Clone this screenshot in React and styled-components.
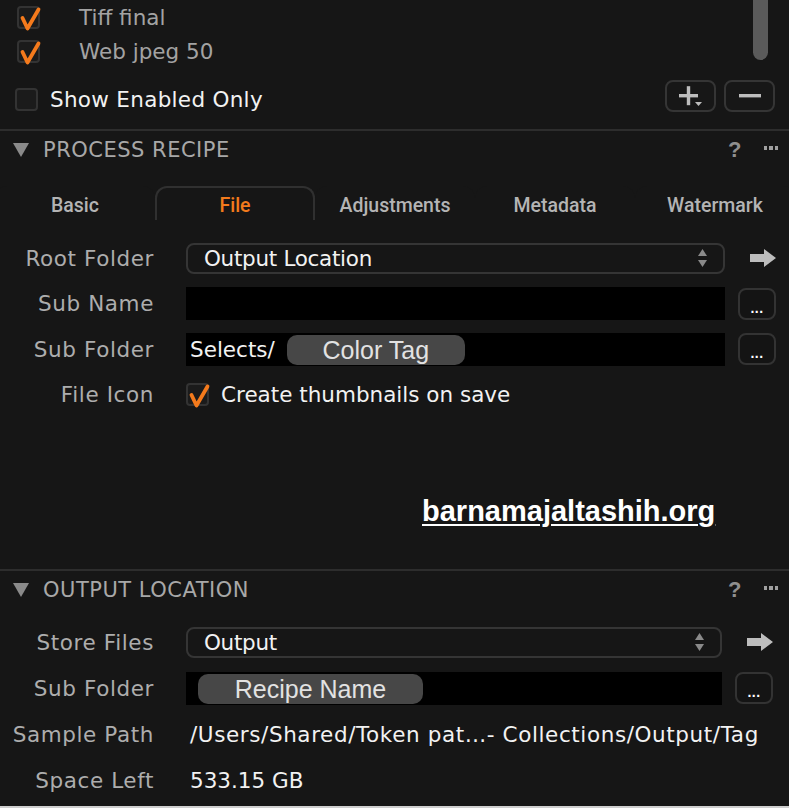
import React from 'react';
import styled, { createGlobalStyle } from 'styled-components';

const GlobalStyle = createGlobalStyle`
  html, body {
    margin: 0;
    padding: 0;
    background: #161616;
  }
`;

const UI_FONT = `"DejaVu Sans", "Liberation Sans", sans-serif`;

const Panel = styled.div`
  width: 789px;
  height: 808px;
  box-sizing: border-box;
  background: #161616;
  border-bottom: 2px solid #cfcfcf;
  display: flex;
  flex-direction: column;
  overflow: hidden;
  font-family: ${UI_FONT};
  font-size: 21.5px;
  color: #f2f2f2;
`;

const RecipeList = styled.div`
  position: relative;
  height: 129px;
  display: flex;
  flex-direction: column;
`;

const ListItem = styled.div`
  height: 34px;
  display: flex;
  align-items: center;
  padding-left: 17px;
`;

const ItemName = styled.span`
  margin-left: 39px;
  color: #a3a3a3;
`;

const Scrollbar = styled.div`
  position: absolute;
  top: 0;
  right: 21px;
  width: 15px;
  height: 60px;
  border-radius: 0 0 8px 8px;
  background: #5a5a5a;
`;

const ListFooter = styled.div`
  display: flex;
  align-items: center;
  margin-top: 13px;
  padding: 0 14px 0 15px;
  height: 32px;
`;

const FooterLabel = styled.span`
  margin-left: 12px;
  flex: 1;
  margin-top: 4px;
  letter-spacing: 0.3px;
`;

const ButtonGroup = styled.div`
  display: flex;
  gap: 8px;
  margin-top: -2px;
`;

const ToolButton = styled.button`
  width: 51px;
  height: 32px;
  box-sizing: border-box;
  border: 2px solid #353535;
  border-radius: 8px;
  background: #171717;
  display: flex;
  align-items: center;
  justify-content: center;
  padding: 0;
`;

const Box = styled.span`
  position: relative;
  width: 23px;
  height: 23px;
  box-sizing: border-box;
  border: 2px solid #333;
  border-radius: 4px;
  background: #1b1b1b;
  flex-shrink: 0;
  display: inline-block;
  margin-top: ${(p) => p.$drop || 0}px;
  svg {
    position: absolute;
    left: -2px;
    top: -5px;
  }
`;

const Divider = styled.div`
  height: 2px;
  background: #2d2d2d;
`;

const SectionHeader = styled.div`
  height: 38px;
  display: flex;
  align-items: center;
  padding: 0 11px 0 13px;
`;

const Disclosure = styled.span`
  width: 0;
  height: 0;
  border-left: 8.5px solid transparent;
  border-right: 8.5px solid transparent;
  border-top: 14px solid #8a8a8a;
`;

const SectionTitle = styled.span`
  margin-left: 14px;
  flex: 1;
  color: #a8a8a8;
  font-size: 21px;
  letter-spacing: 0.5px;
`;

const HelpMark = styled.span`
  font-family: "Liberation Sans", Arial, sans-serif;
  font-weight: 700;
  font-size: 22px;
  color: #8f8f8f;
  margin-right: 22px;
`;

const MoreDots = styled.span`
  display: flex;
  gap: 2px;
  margin-top: -4px;
  i {
    width: 3.5px;
    height: 3.5px;
    background: #a0a0a0;
  }
`;

const TabBar = styled.div`
  margin-top: 15px;
  margin-left: -5px;
  height: 36px;
  box-sizing: border-box;
  border-bottom: 2px solid #303030;
  display: flex;
  align-items: flex-end;
`;

const Tab = styled.div`
  width: 160px;
  height: 34px;
  box-sizing: border-box;
  margin-bottom: -2px;
  flex-shrink: 0;
  display: flex;
  align-items: center;
  justify-content: center;
  font-family: Roboto, "Liberation Sans", sans-serif;
  font-weight: 500;
  font-size: 19.5px;
  border: 2px solid ${(p) => (p.$active ? '#303030' : 'transparent')};
  border-bottom: none;
  border-radius: 12px 12px 0 0;
  background: #161616;
  color: ${(p) => (p.$active ? '#f27a1c' : '#b4b4b4')};
  padding-top: 2px;
`;

const FormBody = styled.div`
  flex: 1;
  display: flex;
  flex-direction: column;
  padding-top: 22px;
`;

const Form = styled.div`
  display: grid;
  grid-template-columns: 173px 539px 38px;
  column-gap: 13px;
  row-gap: 13.5px;
  grid-auto-rows: 32px;
  align-items: center;
`;

const OutputForm = styled(Form)`
  padding: 17px 0 10px;
  row-gap: 14px;
  grid-template-columns: 173px 536px 38px;
`;

const Label = styled.span`
  justify-self: end;
  padding-right: 19px;
  color: #adadad;
  letter-spacing: 0.6px;
  white-space: nowrap;
`;

const Select = styled.div`
  height: 31px;
  box-sizing: border-box;
  border: 2px solid #353535;
  border-radius: 8px;
  display: flex;
  align-items: center;
  padding: 0 15px 0 16px;
  span {
    flex: 1;
    letter-spacing: -0.3px;
  }
`;

const Field = styled.div`
  height: 33px;
  background: #000;
  display: flex;
  align-items: center;
  padding-left: ${(p) => p.$inset || 0}px;
`;

const Token = styled.span`
  margin-left: ${(p) => p.$offset}px;
  width: ${(p) => p.$width}px;
  height: 30px;
  margin-top: 2px;
  border-radius: 10px;
  background: #474747;
  display: flex;
  align-items: center;
  justify-content: center;
  font-family: "Liberation Sans", Arial, sans-serif;
  font-size: 25px;
  color: #e2e2e2;
`;

const EllipsisButton = styled.button`
  width: 38px;
  height: 32px;
  box-sizing: border-box;
  border: 2px solid #333;
  border-radius: 8px;
  background: #141414;
  color: #fff;
  font-family: "Liberation Sans", Arial, sans-serif;
  font-weight: 700;
  font-size: 14px;
  letter-spacing: 0.5px;
  padding: 8px 0 0;
`;

const ArrowCell = styled.span`
  justify-self: end;
  display: flex;
`;

const CheckField = styled.div`
  display: flex;
  align-items: center;
  span:last-child {
    margin-left: 12px;
  }
`;

const Value = styled.span`
  padding-left: 4px;
  white-space: nowrap;
  letter-spacing: ${(p) => (p.$wide ? '0.6px' : 'normal')};
`;

const Watermark = styled.div`
  margin-top: 84px;
  padding-left: 422px;
  font-family: "Liberation Sans", Arial, sans-serif;
  font-weight: 700;
  font-size: 29px;
  line-height: 32px;
  color: #fff;
  text-decoration: underline;
  text-decoration-thickness: 2px;
  text-underline-offset: 3px;
`;

function Check({ on, drop }) {
  return (
    <Box $drop={drop}>
      {on && (
        <svg width="27" height="30" viewBox="0 0 27 30">
          <polyline points="5.5,15 10.5,25.5 21.5,6.5" fill="none" stroke="#f47a1c" strokeWidth="3.8" strokeLinecap="round" strokeLinejoin="round" />
        </svg>
      )}
    </Box>
  );
}

function Stepper() {
  return (
    <svg width="11" height="20" viewBox="0 0 11 20">
      <polygon points="5.5,1 10,8 1,8" fill="#8a8a8a" />
      <polygon points="5.5,19 10,12 1,12" fill="#8a8a8a" />
    </svg>
  );
}

function GoArrow() {
  return (
    <svg width="26" height="18" viewBox="0 0 26 18">
      <polygon points="0,5 14,5 14,0 26,9 14,18 14,13 0,13" fill="#bdbdbd" />
    </svg>
  );
}

function More() {
  return (
    <MoreDots>
      <i />
      <i />
      <i />
    </MoreDots>
  );
}

function Row({ label, children, trailing }) {
  return (
    <>
      <Label>{label}</Label>
      {children}
      {trailing || <span />}
    </>
  );
}

export default function App() {
  return (
    <Panel>
      <GlobalStyle />
      <RecipeList>
        <ListItem>
          <Check on />
          <ItemName>Tiff final</ItemName>
        </ListItem>
        <ListItem>
          <Check on />
          <ItemName>Web jpeg 50</ItemName>
        </ListItem>
        <ListFooter>
          <Check drop={4} />
          <FooterLabel>Show Enabled Only</FooterLabel>
          <ButtonGroup>
            <ToolButton aria-label="Add">
              <svg width="26" height="22" viewBox="0 0 26 22">
                <rect x="1" y="9" width="19" height="3.4" fill="#bdbdbd" />
                <rect x="8.8" y="1.2" width="3.4" height="19" fill="#bdbdbd" />
                <polygon points="17,17 24,17 20.5,21" fill="#bdbdbd" />
              </svg>
            </ToolButton>
            <ToolButton aria-label="Remove">
              <svg width="22" height="6" viewBox="0 0 22 6">
                <rect x="0" y="1" width="22" height="3.4" fill="#bdbdbd" />
              </svg>
            </ToolButton>
          </ButtonGroup>
        </ListFooter>
        <Scrollbar />
      </RecipeList>

      <Divider />
      <SectionHeader>
        <Disclosure />
        <SectionTitle>PROCESS RECIPE</SectionTitle>
        <HelpMark>?</HelpMark>
        <More />
      </SectionHeader>

      <TabBar>
        <Tab>Basic</Tab>
        <Tab $active>File</Tab>
        <Tab>Adjustments</Tab>
        <Tab>Metadata</Tab>
        <Tab>Watermark</Tab>
      </TabBar>

      <FormBody>
        <Form>
          <Row label="Root Folder" trailing={<ArrowCell><GoArrow /></ArrowCell>}>
            <Select>
              <span>Output Location</span>
              <Stepper />
            </Select>
          </Row>
          <Row label="Sub Name" trailing={<EllipsisButton>...</EllipsisButton>}>
            <Field />
          </Row>
          <Row label="Sub Folder" trailing={<EllipsisButton>...</EllipsisButton>}>
            <Field $inset={4}>
              <span>Selects/</span>
              <Token $offset={12} $width={178}>Color Tag</Token>
            </Field>
          </Row>
          <Row label="File Icon">
            <CheckField>
              <Check on />
              <span>Create thumbnails on save</span>
            </CheckField>
          </Row>
        </Form>
        <Watermark>barnamajaltashih.org</Watermark>
      </FormBody>

      <Divider />
      <SectionHeader>
        <Disclosure />
        <SectionTitle>OUTPUT LOCATION</SectionTitle>
        <HelpMark>?</HelpMark>
        <More />
      </SectionHeader>
      <OutputForm>
        <Row label="Store Files" trailing={<ArrowCell><GoArrow /></ArrowCell>}>
          <Select>
            <span>Output</span>
            <Stepper />
          </Select>
        </Row>
        <Row label="Sub Folder" trailing={<EllipsisButton>...</EllipsisButton>}>
          <Field>
            <Token $offset={12} $width={225}>Recipe Name</Token>
          </Field>
        </Row>
        <Row label="Sample Path">
          <Value $wide>/Users/Shared/Token pat…- Collections/Output/Tag</Value>
        </Row>
        <Row label="Space Left">
          <Value>533.15 GB</Value>
        </Row>
      </OutputForm>
    </Panel>
  );
}
